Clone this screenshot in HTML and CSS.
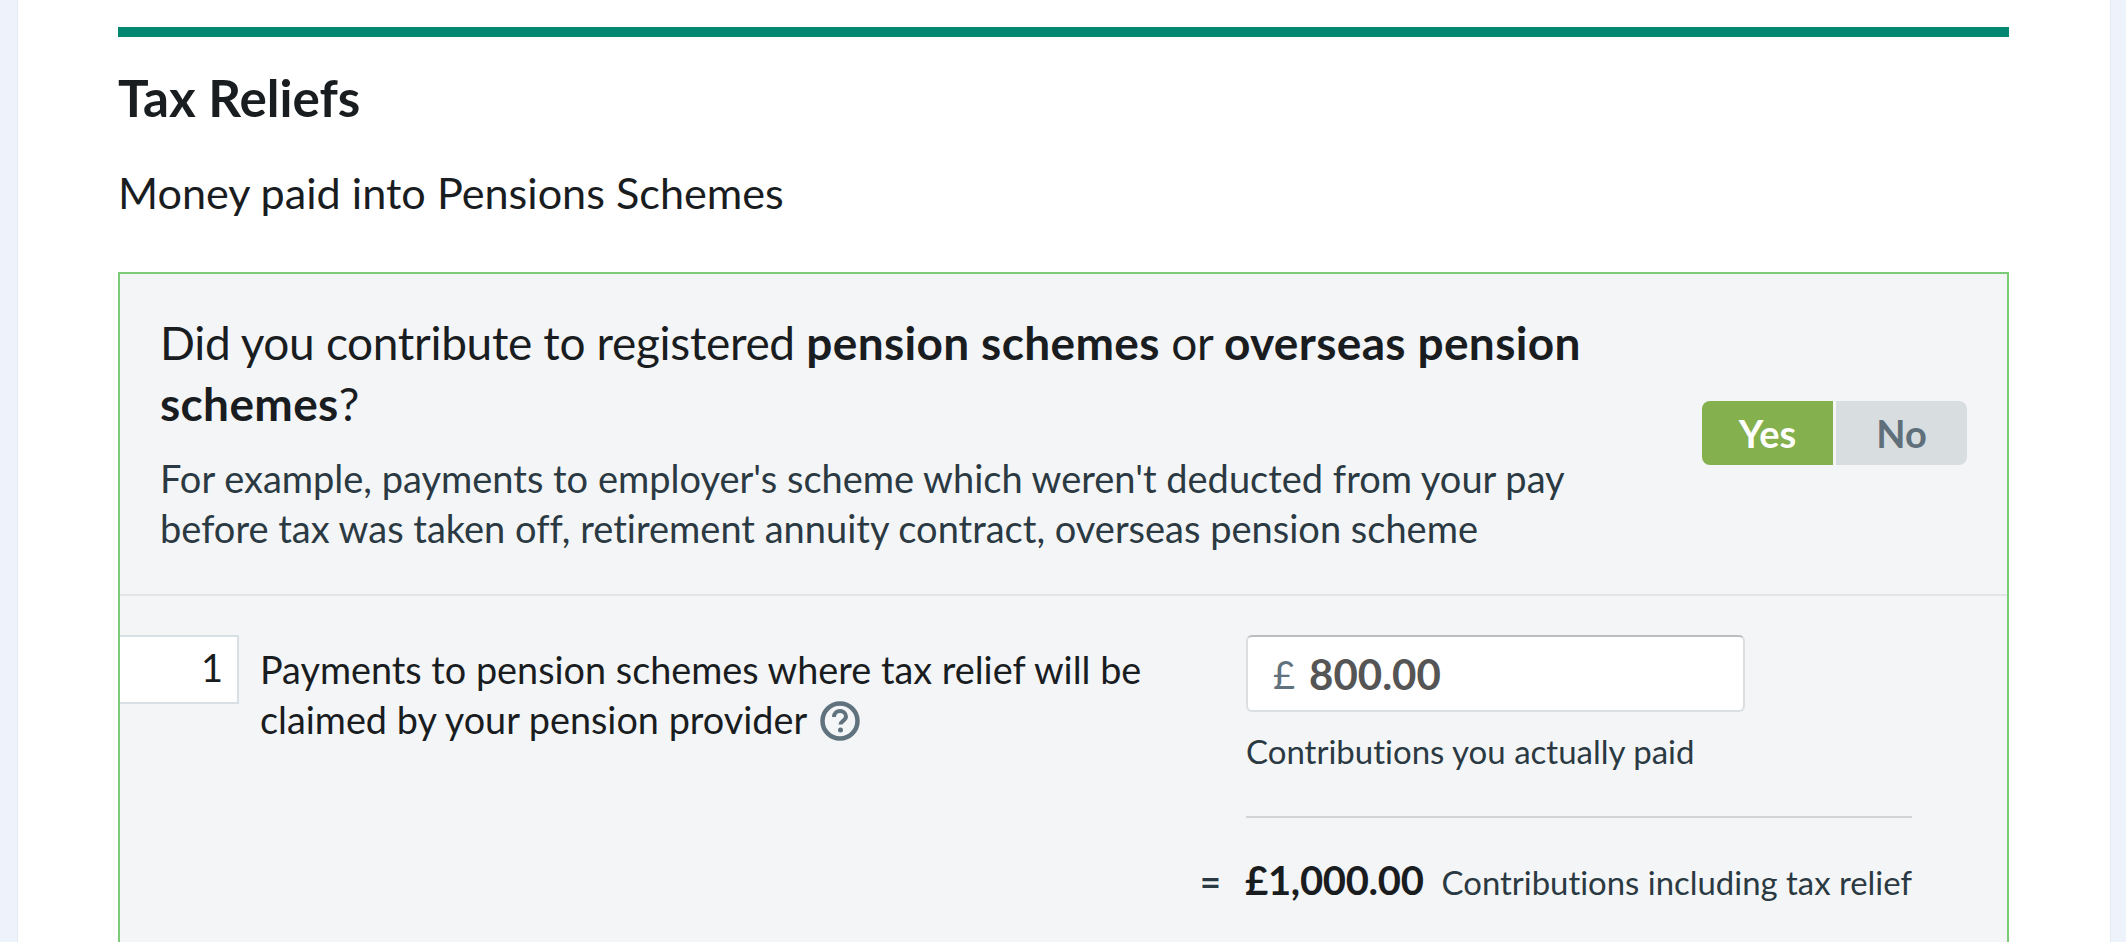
FILE: index.html
```html
<!DOCTYPE html>
<html lang="en">
<head>
    <meta charset="UTF-8">
    <title>Tax Reliefs</title>
    <link rel="stylesheet" href="styles.css">
</head>
<body>
    <div class="page">
        <div class="top-rule"></div>
        <h2 class="section-title">Tax Reliefs</h2>
        <p class="section-sub">Money paid into Pensions Schemes</p>

        <section class="panel">
            <div class="question">
                <div class="question-text">
                    <h3>Did you contribute to registered <b>pension schemes</b> or <b>overseas pension schemes</b>?</h3>
                    <p>For example, payments to employer's scheme which weren't deducted from your pay before tax was taken off, retirement annuity contract, overseas pension scheme</p>
                </div>
                <div class="toggle">
                    <span class="toggle-yes">Yes</span>
                    <span class="toggle-no">No</span>
                </div>
            </div>

            <div class="row">
                <div class="row-num">1</div>
                <div class="row-label">
                    Payments to pension schemes where tax relief will be claimed by your pension provider
                    <svg class="help-icon" viewBox="0 0 40 40" width="40" height="40">
                        <circle cx="20" cy="20" r="17.500" fill="none" stroke="#5f727e" stroke-width="4.500"/>
                        <path d="M14 16c0-4 3-6 6-6s6 2 6 5.500c0 4-5.500 4.500-5.500 8" fill="none" stroke="#5f727e" stroke-width="4"/>
                        <circle cx="20.500" cy="29" r="2.500" fill="#5f727e"/>
                    </svg>
                </div>
                <div class="row-fields">
                    <div class="money-input">
                        <span class="currency">£</span>
                        <span class="money-value">800.00</span>
                    </div>
                    <div class="field-note">Contributions you actually paid</div>
                    <div class="field-total">
                        <span class="equals">=</span>
                        <b class="total-value">£1,000.00</b>
                        <span class="total-note">Contributions including tax relief</span>
                    </div>
                </div>
            </div>
        </section>
    </div>
</body>
</html>
```

FILE: styles.css
```css
html, body {
    height: 942px;
    overflow: hidden;
}
body {
    margin: 0;
    background-color: #eef3fb;
    font-family: Lato, "Noto Sans", sans-serif;
    font-variant-ligatures: none;
    color: #1a1d1f;
}
.page {
    margin: 0 15px 0 17px;
    height: 942px;
    padding: 27px 101px 0 100px;
    background-color: white;
    border-left: 1px solid #e6ebf3;
    border-right: 1px solid #e6ebf3;
}
.top-rule {
    height: 10px;
    background-color: #028771;
}
.section-title {
    margin: 32px 0 0 0;
    font-size: 51.200px;
    line-height: 56px;
    font-weight: 700;
}
.section-sub {
    margin: 42px 0 0 0;
    font-size: 43.200px;
    line-height: 50px;
}
.panel {
    margin-top: 55px;
    border: 2px solid #7ccb77;
    border-bottom: none;
    background-color: #f4f5f7;
    height: 700px;
}
.question {
    display: flex;
    align-items: center;
    justify-content: space-between;
    padding: 38px 40px 41px 40px;
    border-bottom: 2px solid #e2e5e8;
}
.question-text {
    width: 1430px;
}
.question-text h3 {
    margin: 0;
    font-size: 46px;
    line-height: 61px;
    font-weight: 400;
    letter-spacing: -0.33px;
}
.question-text h3 b {
    letter-spacing: 0.35px;
}
.question-text p {
    margin: 19px 0 0 0;
    font-size: 38px;
    line-height: 50px;
    color: #2b3a42;
}
.toggle {
    display: flex;
    gap: 3px;
    font-size: 38px;
    font-weight: 700;
    line-height: 64px;
    text-align: center;
}
.toggle-yes {
    width: 131px;
    background-color: #84b04d;
    color: white;
    border-radius: 8px 0 0 8px;
}
.toggle-no {
    width: 131px;
    background-color: #d8dde0;
    color: #5f707b;
    border-radius: 0 8px 8px 0;
}
.row {
    display: flex;
    align-items: flex-start;
    padding-top: 39px;
}
.row-num {
    width: 119px;
    height: 69px;
    box-sizing: border-box;
    padding-right: 14px;
    border: 2px solid #d9e0e3;
    border-left: none;
    background-color: white;
    font-size: 38px;
    line-height: 60px;
    text-align: right;
}
.row-label {
    width: 900px;
    margin-left: 21px;
    padding-top: 10px;
    margin-right: 86px;
    font-size: 37.800px;
    line-height: 50px;
}
.help-icon {
    vertical-align: -7px;
    margin-left: 4px;
}
.row-fields {
    width: 666px;
}
.money-input {
    display: flex;
    align-items: center;
    width: 499px;
    height: 77px;
    box-sizing: border-box;
    padding-left: 25px;
    background-color: white;
    border: 2px solid #dcdfe1;
    border-top-color: #bbbdbf;
    border-radius: 6px;
}
.currency {
    font-size: 38px;
    color: #5f727e;
    margin-right: 14px;
}
.money-value {
    font-size: 42px;
    font-weight: 700;
    color: #555;
}
.field-note {
    margin-top: 17px;
    padding-bottom: 43px;
    border-bottom: 2px solid #d2d3d5;
    font-size: 33px;
    line-height: 44px;
    color: #2b3a42;
}
.field-total {
    display: flex;
    align-items: baseline;
    margin-top: 37px;
    line-height: 50px;
}
.equals {
    width: 46px;
    margin-left: -46px;
    font-size: 36px;
    font-weight: 700;
    color: #2b3a42;
}
.total-value {
    font-size: 40px;
    letter-spacing: -0.3px;
    margin-right: 18px;
}
.total-note {
    font-size: 32.900px;
    white-space: nowrap;
    color: #2b3a42;
}
```
